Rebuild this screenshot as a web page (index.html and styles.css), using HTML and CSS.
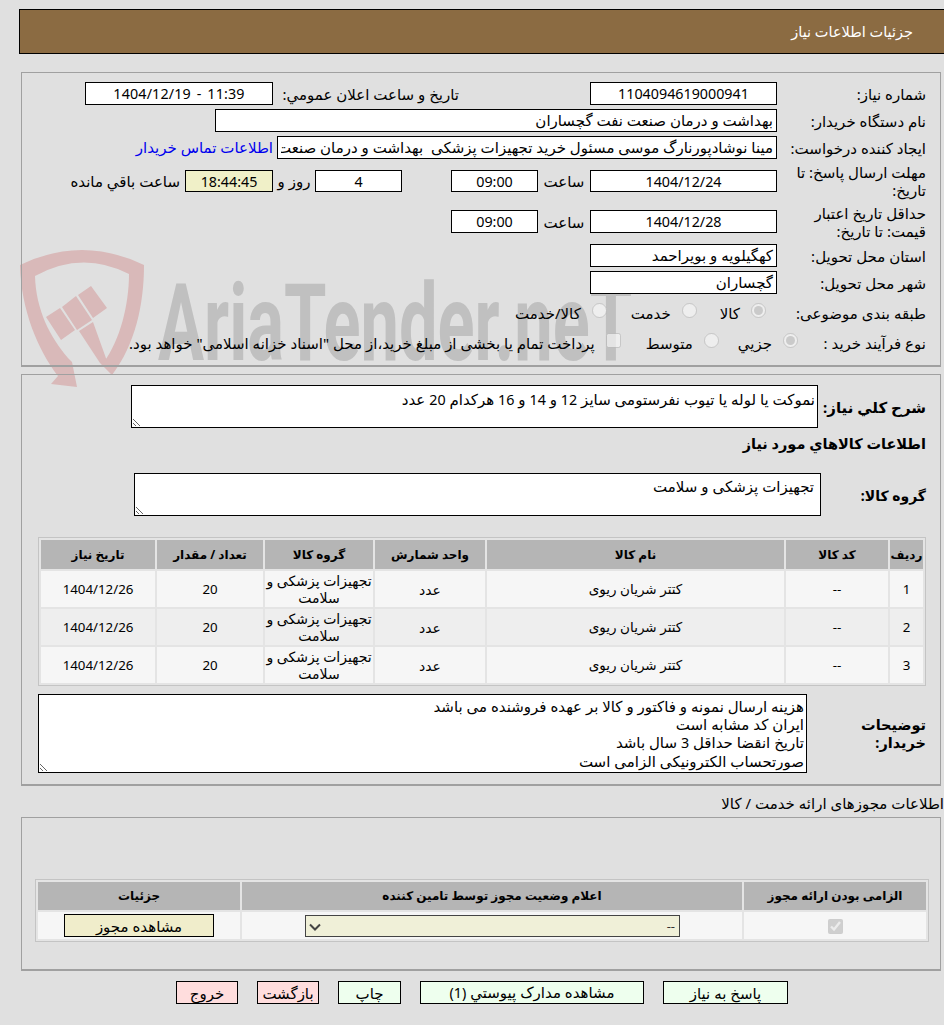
FILE: index.html
```html
<!DOCTYPE html>
<html lang="fa" dir="rtl">
<head>
<meta charset="utf-8">
<title>جزئیات اطلاعات نیاز</title>
<link rel="stylesheet" href="styles.css">
</head>
<body>
<div class="watermark" aria-hidden="true">
  <svg class="wm-shield" viewBox="0 240 160 160" width="160" height="160">
    <path d="M20 265Q82 235 144 265C144 305 135 345 112 375L104 362C120 340 129 305 129 274Q82 250 35 276C36 310 50 337 68 358L72 362L77 387L51 384L58 376C38 350 21 310 20 265Z"/>
    <path d="M46 317L60 308L75 330L61 340ZM62 307L76 296L92 320L77 330ZM78 295L91 286L107 308L93 318ZM79 331L93 322L112 375L100 363Z"/>
  </svg>
  <span class="wm-text" dir="ltr">AriaTender.neT</span>
</div>
<div class="page">
  <header class="top">جزئیات اطلاعات نیاز</header>

  <section class="panel panel-form">
    <div class="row">
      <div class="lab">شماره نیاز:</div>
      <div class="box w187 center num">1104094619000941</div>
      <div class="lab2">تاریخ و ساعت اعلان عمومي:</div>
      <div class="box w188 center num wide" dir="ltr">1404/12/19 - 11:39</div>
    </div>
    <div class="row r2">
      <div class="lab">نام دستگاه خریدار:</div>
      <div class="box w562">بهداشت و درمان صنعت نفت گچساران</div>
    </div>
    <div class="row r2">
      <div class="lab">ایجاد کننده درخواست:</div>
      <div class="box w500"><div class="clip">مینا نوشادپورنارگ موسی مسئول خرید تجهیزات پزشکی  بهداشت و درمان صنعت</div></div>
      <a class="link" href="#">اطلاعات تماس خریدار</a>
    </div>
    <div class="row r4">
      <div class="lab">مهلت ارسال پاسخ: تا تاریخ:</div>
      <div class="box w187 center num">1404/12/24</div>
      <div class="unit">ساعت</div>
      <div class="box w87 center num">09:00</div>
      <div class="box w87 center gap49 num">4</div>
      <div class="unit2">روز و</div>
      <div class="box w88 center timer num">18:44:45</div>
      <div class="remain">ساعت باقي مانده</div>
    </div>
    <div class="row r5">
      <div class="lab">حداقل تاریخ اعتبار قیمت: تا تاریخ:</div>
      <div class="box w187 center num">1404/12/28</div>
      <div class="unit">ساعت</div>
      <div class="box w87 center num">09:00</div>
    </div>
    <div class="row r6">
      <div class="lab">استان محل تحویل:</div>
      <div class="box w187">کهگیلویه و بویراحمد</div>
    </div>
    <div class="row r2">
      <div class="lab">شهر محل تحویل:</div>
      <div class="box w187">گچساران</div>
    </div>
    <div class="row r8">
      <div class="lab">طبقه بندی موضوعی:</div>
      <label class="opt o1"><input type="radio" name="a" disabled checked><span>کالا</span></label>
      <label class="opt o2"><input type="radio" name="a" disabled><span>خدمت</span></label>
      <label class="opt o3"><input type="radio" name="a" disabled><span>کالا/خدمت</span></label>
    </div>
    <div class="row r9">
      <div class="lab lab-short">نوع فرآیند خرید :</div>
      <label class="opt o6"><input type="radio" name="b" disabled checked><span>جزیي</span></label>
      <label class="opt o4"><input type="radio" name="b" disabled><span>متوسط</span></label>
      <label class="opt o5"><input type="checkbox" disabled><span>پرداخت تمام یا بخشی از مبلغ خرید،از محل "اسناد خزانه اسلامی" خواهد بود.</span></label>
    </div>
  </section>

  <section class="panel panel-need">
    <div class="need-row">
      <div class="strong need-lab">شرح كلي نياز:</div>
      <div class="ta ta-need">نموکت یا لوله یا تیوب نفرستومی سایز <span class="num">12</span> و <span class="num">14</span> و <span class="num">16</span> هرکدام <span class="num">20</span> عدد</div>
    </div>
    <div class="strong goods-title">اطلاعات كالاهاي مورد نياز</div>
    <div class="group-row">
      <div class="strong group-lab">گروه کالا:</div>
      <div class="ta ta-group">تجهیزات پزشکی و سلامت</div>
    </div>
    <table class="grid goods">
      <colgroup><col class="c1"><col class="c2"><col class="c3"><col class="c4"><col class="c5"><col class="c6"><col class="c7"></colgroup>
      <thead><tr><th>ردیف</th><th>کد کالا</th><th>نام کالا</th><th>واحد شمارش</th><th>گروه کالا</th><th>تعداد / مقدار</th><th>تاریخ نیاز</th></tr></thead>
      <tbody>
        <tr><td class="dig">1</td><td class="dig">--</td><td>کتتر شریان ریوی</td><td class="tight">عدد</td><td class="tight">تجهیزات پزشکی و سلامت</td><td class="dig">20</td><td class="dig">1404/12/26</td></tr>
        <tr><td class="dig">2</td><td class="dig">--</td><td>کتتر شریان ریوی</td><td class="tight">عدد</td><td class="tight">تجهیزات پزشکی و سلامت</td><td class="dig">20</td><td class="dig">1404/12/26</td></tr>
        <tr><td class="dig">3</td><td class="dig">--</td><td>کتتر شریان ریوی</td><td class="tight">عدد</td><td class="tight">تجهیزات پزشکی و سلامت</td><td class="dig">20</td><td class="dig">1404/12/26</td></tr>
      </tbody>
    </table>
    <div class="notes-row">
      <div class="strong notes-lab">توضیحات خریدار:</div>
      <div class="ta ta-notes">هزینه ارسال نمونه و فاکتور و کالا بر عهده فروشنده می باشد<br>ایران کد مشابه است<br>تاریخ انقضا حداقل <span class="num">3</span> سال باشد<br>صورتحساب الکترونیکی الزامی است</div>
    </div>
  </section>

  <div class="lic-title">اطلاعات مجوزهای ارائه خدمت / کالا</div>

  <section class="panel panel-lic">
    <table class="grid lic">
      <colgroup><col class="l1"><col class="l2"><col class="l3"></colgroup>
      <thead><tr><th>الزامی بودن ارائه مجوز</th><th>اعلام وضعیت مجوز توسط تامین کننده</th><th>جزئیات</th></tr></thead>
      <tbody>
        <tr>
          <td><input class="chk" type="checkbox" disabled checked></td>
          <td>
            <div class="sel-wrap">
              <select class="sel"><option>--</option></select>
              <svg class="chev" viewBox="0 0 12 8" width="12" height="8"><path d="M1 1.5L6 6.5L11 1.5" fill="none" stroke="#444" stroke-width="2"/></svg>
            </div>
          </td>
          <td><button class="view" type="button">مشاهده مجوز</button></td>
        </tr>
      </tbody>
    </table>
  </section>

  <nav class="actions">
    <button class="act green w125" type="button">پاسخ به نیاز</button>
    <button class="act green w224" type="button">مشاهده مدارک پیوستي <span class="num">(1)</span></button>
    <button class="act green w63" type="button">چاپ</button>
    <button class="act pink w62" type="button">بازگشت</button>
    <button class="act pink w62" type="button">خروج</button>
  </nav>
</div>
</body>
</html>
```
FILE: styles.css
```css
* { box-sizing: border-box; }
html, body { margin: 0; padding: 0; }
body {
  width: 944px;
  height: 1025px;
  overflow: hidden;
  position: relative;
  background: #e0e0e0;
  color: #000;
  font: 15px/18px "Noto Sans", "DejaVu Sans", sans-serif;
}
.num { font-size: 14.3px; }
.wide { word-spacing: 2px; letter-spacing: 0.15px; }
.watermark { position: absolute; left: 0; top: 0; width: 944px; height: 1025px; z-index: 0; direction: ltr; }
.wm-shield { position: absolute; left: 0; top: 240px; fill: #d9b9b9; }
.wm-text {
  position: absolute;
  left: 158px;
  top: 269px;
  font: bold 108px/108px "Roboto", sans-serif;
  color: #c0c0c0;
  white-space: nowrap;
  transform: scaleX(0.635);
  transform-origin: left top;
}
.page { position: relative; z-index: 1; }

.top {
  height: 45px;
  width: 925px;
  margin: 9px 0 0 19px;
  padding: 0 31px 0 0;
  background: #8b6b42;
  border: 1px solid #000;
  border-right: 0;
  color: #fff;
  font-size: 14.5px;
  line-height: 43px;
}
.panel {
  width: 920px;
  margin-right: 3px;
  border: 1px solid #a0a0a0;
  border-bottom-width: 2px;
  padding-right: 14px;
}
.panel-form { height: 295px; margin-top: 18px; padding-top: 9px; }
.panel-need { height: 412px; margin-top: 7px; }
.panel-lic { height: 154px; margin-top: 5px; padding-top: 61px; padding-right: 11px; }

.row { display: flex; align-items: center; height: 23px; }
.r2 { margin-top: 4px; }
.r4 { margin-top: 11px; height: 22px; }
.r5 { margin-top: 18px; }
.r6 { margin-top: 11px; }
.r8 { margin-top: 9px; height: 20px; }
.r9 { margin-top: 10px; height: 20px; }

.lab { width: 149px; flex: none; padding-left: 8px; }
.lab-short { width: 127px; }
.lab2 { width: 186px; flex: none; margin-right: 131px; white-space: nowrap; }
.box {
  height: 100%;
  flex: none;
  background: #fff;
  border: 1px solid #000;
  padding: 0 3px;
  line-height: 21px;
  white-space: pre;
}
.center { text-align: center; }
.clip { overflow: hidden; }
.w187 { width: 187px; }
.w188 { width: 188px; }
.w562 { width: 562px; }
.w500 { width: 500px; }
.w87 { width: 87px; }
.w88 { width: 88px; }
.gap49 { margin-right: 49px; }
.timer { background: #f0f0c8; }
.link { margin-right: 4px; padding-bottom: 2px; color: #0000ee; text-decoration: none; white-space: nowrap; }
.unit { width: 52px; flex: none; text-align: center; }
.unit2 { width: 42px; flex: none; text-align: center; }
.remain { margin-right: 5px; white-space: nowrap; }

.opt { display: flex; align-items: center; flex: none; white-space: nowrap; }
.opt input { width: 15px; height: 15px; margin: 0 0 6px 0; flex: none; }
.opt span { margin-right: 11px; }
.o1 { margin-right: 11px; }
.o2 { margin-right: 23px; }
.o3 { margin-right: 24px; }
.o6 { margin-right: 1px; }
.o4 { margin-right: 19px; }
.o5 { margin-right: 25px; }

.strong { font-weight: bold; font-size: 14.5px; }
.need-row { display: flex; align-items: center; height: 43px; margin-top: 10px; }
.need-lab { width: 108px; flex: none; font-size: 15px; }
.ta {
  flex: none;
  background: #fff;
  border: 1px solid #000;
  padding: 4px 2px 0;
  overflow: auto;
  resize: both;
}
.ta-need { width: 687px; height: 43px; }
.goods-title { margin-top: 6px; height: 18px; }
.group-row { display: flex; align-items: center; height: 43px; margin-top: 21px; }
.group-lab { width: 105px; flex: none; padding-top: 2px; font-size: 14px; }
.ta-group { width: 687px; height: 43px; padding-top: 3px; padding-right: 6px; }

.grid {
  border-collapse: separate;
  border-spacing: 2px;
  border: 1px solid #c4c4c4;
  table-layout: fixed;
  background: #e4e4e4;
}
.grid th { background: #b5b5b5; font-size: 12px; font-weight: bold; height: 29px; padding: 0; text-align: center; }
.grid td { background: #f6f6f6; font-size: 13.5px; text-align: center; padding: 0; height: 36px; line-height: 17px; }
.grid td.dig { font-size: 13.3px; }
.grid td.tight { font-size: 14px; }
.goods tbody tr:nth-child(2) td { background: #eeeeee; }
.goods { width: 888px; margin-top: 21px; }
.c1 { width: 33px; } .c2 { width: 102px; } .c3 { width: 297px; } .c4 { width: 110px; }
.c5 { width: 108px; } .c6 { width: 106px; } .c7 { width: 114px; }
.notes-row { display: flex; align-items: center; height: 79px; margin-top: 8px; }
.notes-lab { width: 119px; flex: none; padding-bottom: 2px; padding-left: 20px; }
.ta-notes { width: 769px; height: 79px; padding-top: 2px; }

.lic-title { margin-top: 8px; height: 18px; white-space: nowrap; }
.lic { width: 894px; }
.l1 { width: 182px; } .l2 { width: 500px; } .l3 { width: 202px; }
.lic th { height: 28px; }
.lic td { height: 27px; }
.chk { width: 15px; height: 15px; margin: 0; vertical-align: middle; }
.sel-wrap { position: relative; width: 375px; margin-right: 62px; }
.sel {
  display: block;
  appearance: none;
  width: 375px;
  height: 22px;
  padding: 0 4px;
  background: #f0f0d8;
  border: 1px solid #444;
  border-radius: 0;
  color: #333;
  font: 13px "Noto Sans", "DejaVu Sans", sans-serif;
}
.chev { position: absolute; left: 4px; top: 8px; }
.view {
  display: block;
  width: 150px;
  height: 23px;
  margin-right: 26px;
  padding: 0;
  background: #f0edcb;
  border: 1px solid #000;
  font: 15px/18px "Noto Sans", "DejaVu Sans", sans-serif;
  color: #000;
}
.actions { display: flex; gap: 19px; margin-top: 10px; margin-right: 156px; }
.act {
  height: 23px;
  padding: 0;
  flex: none;
  border: 1px solid #000;
  font: 15px/18px "Noto Sans", "DejaVu Sans", sans-serif;
  color: #000;
}
.green { background: #eeffee; }
.pink { background: #ffdddd; }
.w125 { width: 125px; }
.w224 { width: 224px; }
.w63 { width: 63px; }
.w62 { width: 62px; }
```
